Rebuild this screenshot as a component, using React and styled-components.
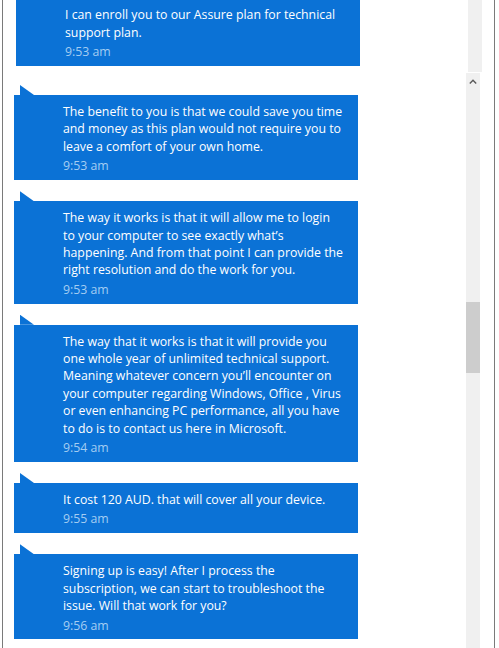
import React from 'react';
import styled, { createGlobalStyle } from 'styled-components';

const GlobalStyle = createGlobalStyle`
  html, body {
    margin: 0;
    padding: 0;
    background: #ffffff;
  }
  body {
    font-family: "Open Sans", "Noto Sans", "Liberation Sans", sans-serif;
  }
`;

const Frame = styled.div`
  box-sizing: border-box;
  width: 493px;
  height: 648px;
  margin-left: 2px;
  border-left: 1px solid #7a7a7a;
  border-right: 1px solid #7a7a7a;
  background: #ffffff;
  display: flex;
  flex-direction: column;
  overflow: hidden;
`;

const Pane = styled.div`
  display: grid;
  grid-template-columns: 1fr 14px ${props => props.gutter}px;
  height: ${props => (props.fill ? 'auto' : `${props.height}px`)};
  flex: ${props => (props.fill ? '1' : '0 0 auto')};
  min-height: 0;
`;

const History = styled.div`
  display: flex;
  flex-direction: column;
  justify-content: flex-end;
  overflow: hidden;
  padding-left: 13px;
`;

const Divider = styled.div`
  width: 344px;
  height: 1px;
  margin: 7px 0 0 -2px;
  background: #3a5a78;
`;

const List = styled.div`
  display: flex;
  flex-direction: column;
  gap: 11px;
  padding: 12px 0 0 11px;
  overflow: hidden;
`;

const Message = styled.div`
  display: flex;
  flex-direction: column;
  width: 344px;
`;

const Tail = styled.div`
  width: 14px;
  height: 10px;
  margin-left: 6px;
  background: #0b72d6;
  clip-path: polygon(0 0, 0 100%, 100% 100%);
`;

const Bubble = styled.div`
  background: #0b72d6;
  padding: 8px 8px 5.5px 49px;
  color: #ffffff;
  font-size: 12.3px;
  line-height: 17.4px;
`;

const Line = styled.div`
  white-space: nowrap;
`;

const Time = styled.div`
  margin-top: 2px;
  color: #a4cdf2;
  white-space: nowrap;
`;

const Track = styled.div`
  display: flex;
  flex-direction: column;
  align-items: stretch;
  background: #f0f0f0;
  margin-bottom: ${props => props.gap || 0}px;
`;

const ArrowButton = styled.div`
  height: 14px;
  margin-top: 1px;
  display: flex;
  align-items: center;
  justify-content: center;
`;

const Thumb = styled.div`
  height: 71px;
  margin-top: ${props => props.offset}px;
  background: #cdcdcd;
`;

const earlier = {
  lines: ['I can enroll you to our Assure plan for technical', 'support plan.'],
  time: '9:53 am',
};

const messages = [
  {
    lines: [
      'The benefit to you is that we could save you time',
      'and money as this plan would not require you to',
      'leave a comfort of your own home.',
    ],
    time: '9:53 am',
  },
  {
    lines: [
      'The way it works is that it will allow me to login',
      'to your computer to see exactly what\u2019s',
      'happening. And from that point I can provide the',
      'right resolution and do the work for you.',
    ],
    time: '9:53 am',
  },
  {
    lines: [
      'The way that it works is that it will provide you',
      'one whole year of unlimited technical support.',
      'Meaning whatever concern you\u2019ll encounter on',
      'your computer regarding Windows, Office , Virus',
      'or even enhancing PC performance, all you have',
      'to do is to contact us here in Microsoft.',
    ],
    time: '9:54 am',
  },
  {
    lines: ['It cost 120 AUD. that will cover all your device.'],
    time: '9:55 am',
  },
  {
    lines: [
      'Signing up is easy! After I process the',
      'subscription, we can start to troubleshoot the',
      'issue. Will that work for you?',
    ],
    time: '9:56 am',
  },
];

const ChatBubble = ({ msg, tail }) => (
  <Message>
    {tail && <Tail />}
    <Bubble>
      {msg.lines.map((l, i) => (
        <Line key={i}>{l}</Line>
      ))}
      <Time>{msg.time}</Time>
    </Bubble>
  </Message>
);

const App = () => {
  return (
    <>
      <GlobalStyle />
      <Frame>
        <Pane height={73} gutter={12}>
          <History>
            <ChatBubble msg={earlier} />
            <Divider />
          </History>
          <Track gap={1} />
          <div />
        </Pane>
        <Pane fill gutter={14}>
          <List>
            {messages.map((m, i) => (
              <ChatBubble key={i} msg={m} tail />
            ))}
          </List>
          <Track>
            <ArrowButton>
              <svg width="8" height="5" viewBox="0 0 8 5">
                <path d="M0.8 4.4 L4 1.2 L7.2 4.4" fill="none" stroke="#5a5a5a" strokeWidth="1.4" />
              </svg>
            </ArrowButton>
            <Thumb offset={214} />
          </Track>
          <div />
        </Pane>
      </Frame>
    </>
  );
};

export default App;
